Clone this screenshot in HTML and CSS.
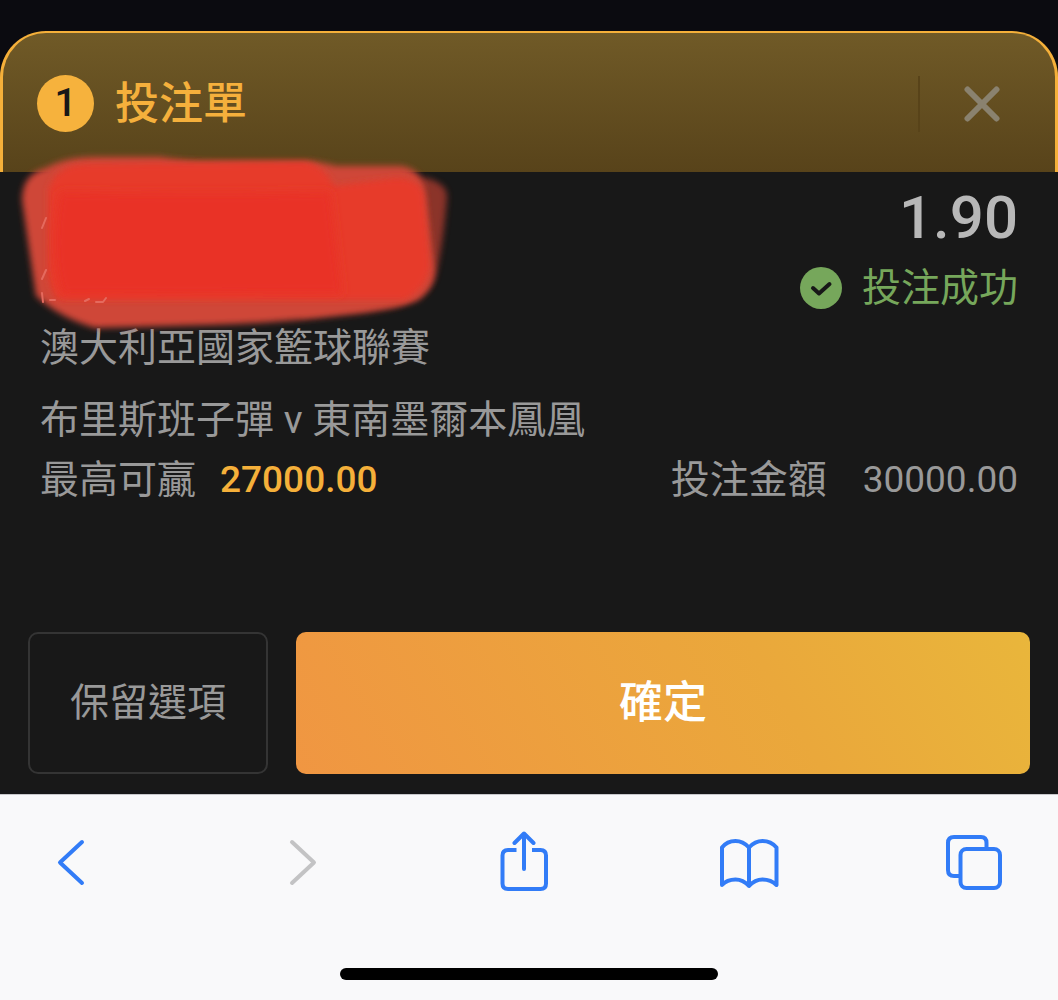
FILE: index.html
```html
<!DOCTYPE html>
<html lang="zh-Hant">
  <head>
    <meta charset="utf-8" />
    <title>投注單</title>
    <meta name="viewport" content="width=device-width, initial-scale=1.0" />
    <link rel="stylesheet" href="styles.css">
  </head>
  <body>
    <main class="slip">
      <header class="slip-header">
        <span class="count">1</span>
        <h1>投注單</h1>
        <button class="close" aria-label="關閉">
          <svg width="36" height="36" viewBox="0 0 36 36">
            <path d="M3.500 3.500L32.500 32.500M32.500 3.500L3.500 32.500" />
          </svg>
        </button>
      </header>

      <section class="slip-body">
        <div class="selection">
          <!-- selection name, painted over -->
          <svg class="marker" width="470" height="200" viewBox="0 0 470 200" aria-hidden="true">
            <defs>
              <filter id="soft" x="-10%" y="-10%" width="120%" height="120%"><feGaussianBlur stdDeviation="3" /></filter>
              <filter id="softer" x="-10%" y="-10%" width="120%" height="120%"><feGaussianBlur stdDeviation="5" /></filter>
            </defs>
            <path class="marker-edge" filter="url(#soft)" d="M330 34L425 38Q448 43 447 58Q442 115 434 140Q426 158 395 166L300 176Z" />
            <path class="marker-light" filter="url(#soft)" d="M22 60Q22 34 46 28Q65 17 95 17L160 17Q178 20 200 21L310 21Q325 23 336 26L400 26Q420 28 424 48L434 130Q434 148 418 160Q395 170 345 175Q270 184 210 185L95 188Q60 178 36 156Q29 110 22 60Z" />
            <path class="marker-dark" filter="url(#soft)" d="M48 50Q56 25 85 24L305 22Q325 26 334 46L395 38Q420 38 424 55L430 125Q428 148 405 160L60 160Q48 152 48 125Z" />
            <path class="marker-core" filter="url(#softer)" d="M60 52Q190 54 330 52L342 154L62 155Q48 110 60 52Z" />
            <path class="marker-rest" d="M42 88L46 78M42 139L46 130M42 153L43 162M50 160H55M85 161L89 159M96 162H103L106 158" />
          </svg>
          <div class="result">
            <strong class="odds">1.90</strong>
            <p class="status">
              <svg width="42" height="42" viewBox="0 0 42 42" aria-hidden="true">
                <circle cx="21" cy="21" r="21" />
                <path d="M13 21L19 26.500L29.500 17" />
              </svg>
              投注成功
            </p>
          </div>
        </div>
        <p class="league">澳大利亞國家籃球聯賽</p>
        <p class="match">布里斯班子彈 v 東南墨爾本鳳凰</p>
        <dl class="amounts">
          <div class="amount">
            <dt>最高可贏</dt>
            <dd class="win">27000.00</dd>
          </div>
          <div class="amount stake">
            <dt>投注金額</dt>
            <dd>30000.00</dd>
          </div>
        </dl>
      </section>

      <div class="actions">
        <button class="keep">保留選項</button>
        <button class="confirm">確定</button>
      </div>
    </main>

    <footer class="browser-bar">
      <nav class="tools">
        <button aria-label="返回">
          <svg width="64" height="64" viewBox="0 0 64 64"><path d="M42 11L20 31.500L42 52" /></svg>
        </button>
        <button aria-label="前進" disabled>
          <svg width="64" height="64" viewBox="0 0 64 64"><path d="M27 11L49 31.500L27 52" /></svg>
        </button>
        <button aria-label="分享">
          <svg width="64" height="64" viewBox="0 0 64 64">
            <path class="flat" d="M26.500 19H18Q12.500 19 12.500 24.500V52.500Q12.500 58 18 58H50.500Q56 58 56 52.500V24.500Q56 19 50.500 19H42" />
            <path d="M34 38V2.500M24.500 12L34 2.500L43.500 12" />
          </svg>
        </button>
        <button aria-label="書籤">
          <svg width="64" height="64" viewBox="0 0 64 64">
            <path d="M34 16.500Q28 10 20.500 10Q12 10 7 16.500V54Q12 48.500 20.500 48.500Q28 48.500 34 55Q40 48.500 47.500 48.500Q56 48.500 61.500 54V16.500Q56 10 47.500 10Q40 10 34 16.500V55" />
          </svg>
        </button>
        <button aria-label="分頁">
          <svg width="64" height="64" viewBox="0 0 64 64">
            <path class="flat" d="M46.500 18V12Q46.500 6 41 6H14Q8 6 8 12V39Q8 45 14 45H20" />
            <rect x="20.500" y="18" width="39.500" height="39" rx="6" />
          </svg>
        </button>
      </nav>
      <div class="home-bar"></div>
    </footer>
  </body>
</html>
```

FILE: styles.css
```css
* {
  box-sizing: border-box;
}

body {
  display: flex;
  flex-direction: column;
  min-height: 100vh;
  margin: 0;
  padding-top: 31px;
  background: #0b0b10;
  color: #999;
  font-family: Roboto, "Noto Sans CJK TC", sans-serif;
  font-size: 39px;
  line-height: 48px;
}

h1, p, dl, dd {
  margin: 0;
}

button {
  margin: 0;
  padding: 0;
  border: 0;
  background: none;
  color: inherit;
  font: inherit;
  cursor: pointer;
}

svg {
  display: block;
  fill: none;
  stroke-linecap: round;
  stroke-linejoin: round;
}

.slip {
  background: #181818;
  border-radius: 46px 46px 0 0;
}

/* header */
.slip-header {
  display: flex;
  align-items: center;
  padding: 42px 37px 40px 34px;
  border: 3px solid #f5b03a;
  border-top-width: 2px;
  border-bottom: 0;
  border-radius: 46px 46px 0 0;
  background: linear-gradient(#705a27, #58431a);
}

.count {
  width: 57px;
  height: 57px;
  border-radius: 50%;
  background: #f6b23d;
  color: #181818;
  font-size: 39px;
  font-weight: 500;
  line-height: 56px;
  text-align: center;
}

h1 {
  margin-left: 21px;
  color: #f5b03c;
  font-size: 44px;
  font-weight: 500;
  line-height: 56px;
}

.close {
  margin-left: auto;
  padding: 10px 18px 10px 44px;
  border-left: 2px solid #584319;
}

.close svg {
  stroke: #8a826f;
  stroke-width: 6;
}

/* bet details */
.slip-body {
  padding: 12px 40px 0;
}

.selection {
  position: relative;
  display: flex;
  justify-content: flex-end;
}

.marker {
  position: absolute;
  top: -44px;
  left: -40px;
}

.marker-edge {
  fill: #a83b2e;
  opacity: 0.8;
}

.marker-light {
  fill: #cf4638;
}

.marker-dark {
  fill: #e73b2b;
}

.marker-core {
  fill: #e93325;
}

.marker-rest {
  stroke: #e56a5e;
  stroke-width: 2;
}

.result {
  text-align: right;
}

.odds {
  display: block;
  color: #b8b8b8;
  font-size: 60px;
  font-weight: 500;
  line-height: 68px;
}

.status {
  display: flex;
  align-items: center;
  gap: 20px;
  padding: 12px 0;
  color: #76a75b;
}

.status circle {
  fill: #76a75b;
}

.status path {
  stroke: #181818;
  stroke-width: 4;
}

.match {
  margin-top: 24px;
}

.amounts {
  display: flex;
  justify-content: space-between;
  margin-top: 12px;
}

.amount {
  display: flex;
  gap: 24px;
}

.amount dd {
  font-size: 37px;
}

.stake {
  gap: 36px;
}

.win {
  color: #f5b03a;
  font-weight: 500;
}

/* buttons */
.actions {
  display: flex;
  gap: 28px;
  padding: 128px 28px 20px;
}

.keep,
.confirm {
  height: 142px;
  border-radius: 10px;
}

.keep {
  padding: 0 40px;
  border: 2px solid #343434;
}

.confirm {
  flex: 1;
  background: linear-gradient(60deg, #f09642, #eaa83b 65%, #e9b63b);
  color: #fff;
  font-size: 44px;
  font-weight: 500;
}

/* browser toolbar */
.browser-bar {
  display: flex;
  flex: 1;
  flex-direction: column;
  justify-content: space-between;
  align-items: center;
  padding: 36px 0 20px;
  border-top: 1px solid #c8c8cb;
  background: #f9f9fa;
}

.tools {
  display: flex;
  align-self: stretch;
  justify-content: space-between;
  padding: 0 54px 0 40px;
}

.tools svg {
  stroke: #327cf7;
  stroke-width: 4;
}

.tools .flat {
  stroke-linecap: butt;
}

.tools button:disabled svg {
  stroke: #c3c3c4;
}

.home-bar {
  width: 378px;
  height: 12px;
  border-radius: 6px;
  background: #000;
}
```
